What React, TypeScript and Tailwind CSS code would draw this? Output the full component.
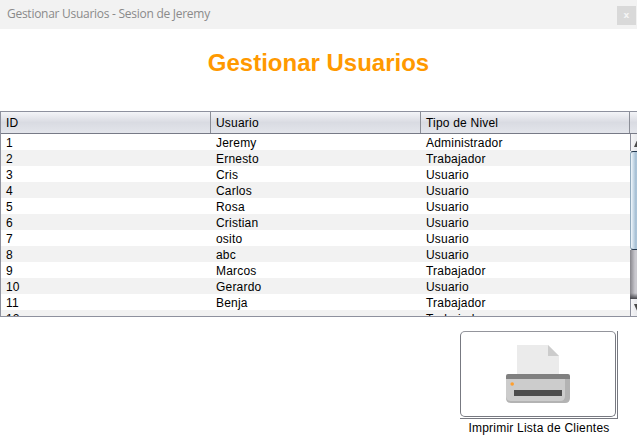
const users = [
  ['1', 'Jeremy', 'Administrador'],
  ['2', 'Ernesto', 'Trabajador'],
  ['3', 'Cris', 'Usuario'],
  ['4', 'Carlos', 'Usuario'],
  ['5', 'Rosa', 'Usuario'],
  ['6', 'Cristian', 'Usuario'],
  ['7', 'osito', 'Usuario'],
  ['8', 'abc', 'Usuario'],
  ['9', 'Marcos', 'Trabajador'],
  ['10', 'Gerardo', 'Usuario'],
  ['11', 'Benja', 'Trabajador'],
  ['12', '', 'Trabajador'],
];

function TitleBar() {
  return (
    <header className="flex h-[29px] items-start justify-between bg-[#f2f2f2] pl-[7px] pr-px">
      <span className="whitespace-nowrap pt-[5px] font-['Open_Sans','Noto_Sans',sans-serif] text-[12px] leading-[18px] tracking-[-0.27px] text-[#8a8a8a]">
        Gestionar Usuarios - Sesion de Jeremy
      </span>
      <button className="mt-[6px] flex h-[19px] w-[19px] items-center justify-center bg-[#d9d9d9] pb-px font-['DejaVu_Sans',sans-serif] text-[9px] font-bold leading-none text-[#f4f4f4]">
        x
      </button>
    </header>
  );
}

function HeaderCell({ label }: { label: string }) {
  return (
    <div className="h-full w-[210px] shrink-0 border-r border-[#8b8e97] pl-[5px] leading-[22px]">
      {label}
    </div>
  );
}

function ScrollBar() {
  return (
    <div className="flex w-[7px] shrink-0 flex-col overflow-hidden">
      <div className="flex h-[17px] w-[17px] shrink-0 items-center border-l border-[#8b8e9b] bg-linear-to-r from-[#f5f5f7] to-[#d2d4da] pl-[3px]">
        <svg width="9" height="8" viewBox="0 0 9 8">
          <path d="M3.5 0 8 8H0Z" fill="#4a4a4a" />
        </svg>
      </div>
      <div className="h-[99px] w-[17px] shrink-0 rounded-l-[3px] border border-[#23394f] border-l-[#91aabd] bg-linear-to-r from-[#f0f7fc] via-[#a9c2d6] via-30% to-[#bdd4e6]" />
      <div className="h-[49px] w-[17px] shrink-0 bg-linear-to-r from-[#88878d] to-[#c9c8ce] to-30%">
        <div className="h-full bg-linear-to-b from-transparent from-88% to-[#44444a]" />
      </div>
      <div className="flex h-[17px] w-[17px] shrink-0 items-center border-l border-[#8b8e9b] bg-linear-to-r from-[#f5f5f7] to-[#d2d4da] pl-[3px]">
        <svg width="9" height="8" viewBox="0 0 9 8">
          <path d="M0 0H8L3.5 8Z" fill="#4a4a4a" />
        </svg>
      </div>
    </div>
  );
}

function UserTable() {
  return (
    <section className="h-[206px] overflow-hidden border-y border-l border-[#8e919e] text-[12px] tracking-[0.2px]">
      <div className="flex h-[22px] border-b border-[#777a86] bg-linear-to-b from-[#f4f5f8] via-[#d9dbe2] via-50% to-[#e3e5eb]">
        <HeaderCell label="ID" />
        <HeaderCell label="Usuario" />
        <div className="h-full w-[209px] shrink-0 border-r border-[#8b8e97] pl-[5px] leading-[22px]">Tipo de Nivel</div>
      </div>
      <div className="flex h-[182px]">
        <div className="w-[629px] shrink-0 overflow-hidden">
          {users.map(([id, name, level]) => (
            <div key={id} className="flex h-4 pl-[5px] leading-[18px] odd:bg-white even:bg-[#f2f2f2]">
              <span className="w-[210px]">{id}</span>
              <span className="w-[210px]">{name}</span>
              <span>{level}</span>
            </div>
          ))}
        </div>
        <ScrollBar />
      </div>
    </section>
  );
}

function PrinterIcon() {
  return (
    <svg width="64" height="58" viewBox="0 0 64 58">
      <path d="M11 0H42L53 11V30H11Z" fill="#ebebeb" />
      <path d="M42 0 53 11H42Z" fill="#cccccc" />
      <path d="M0 33H64V53Q64 58 59 58H5Q0 58 0 53Z" fill="#b3b3b3" />
      <path d="M0 33H59V51Q59 56 54 56H5Q0 56 0 51Z" fill="#cccccc" />
      <path d="M0 34V31Q0 29 2 29H62Q64 29 64 31V34Z" fill="#808080" />
      <circle cx="6.2" cy="39" r="1.8" fill="#ff9f2e" />
      <rect x="8" y="45" width="48" height="6" fill="#4d4d4d" />
    </svg>
  );
}

export default function App() {
  return (
    <main className="flex h-[447px] w-[637px] flex-col overflow-hidden bg-white font-['Liberation_Sans',Arial,sans-serif] text-black">
      <TitleBar />
      <h1 className="h-[82px] pt-[20px] text-center text-[24px] font-bold leading-[28px] text-[#ff9900]">
        Gestionar Usuarios
      </h1>
      <UserTable />
      <div className="ml-[460px] mt-[14px] w-[158px]">
        <div className="h-[88px] border-b border-r border-[#777981]">
          <button className="flex h-[86px] w-[156px] items-start justify-center rounded-[5px] border border-[#777981] border-t-[#94959c] bg-white pt-[13px]">
            <PrinterIcon />
          </button>
        </div>
        <p className="whitespace-nowrap text-center text-[12px] leading-[18px] tracking-[0.22px]">Imprimir Lista de Clientes</p>
      </div>
    </main>
  );
}
